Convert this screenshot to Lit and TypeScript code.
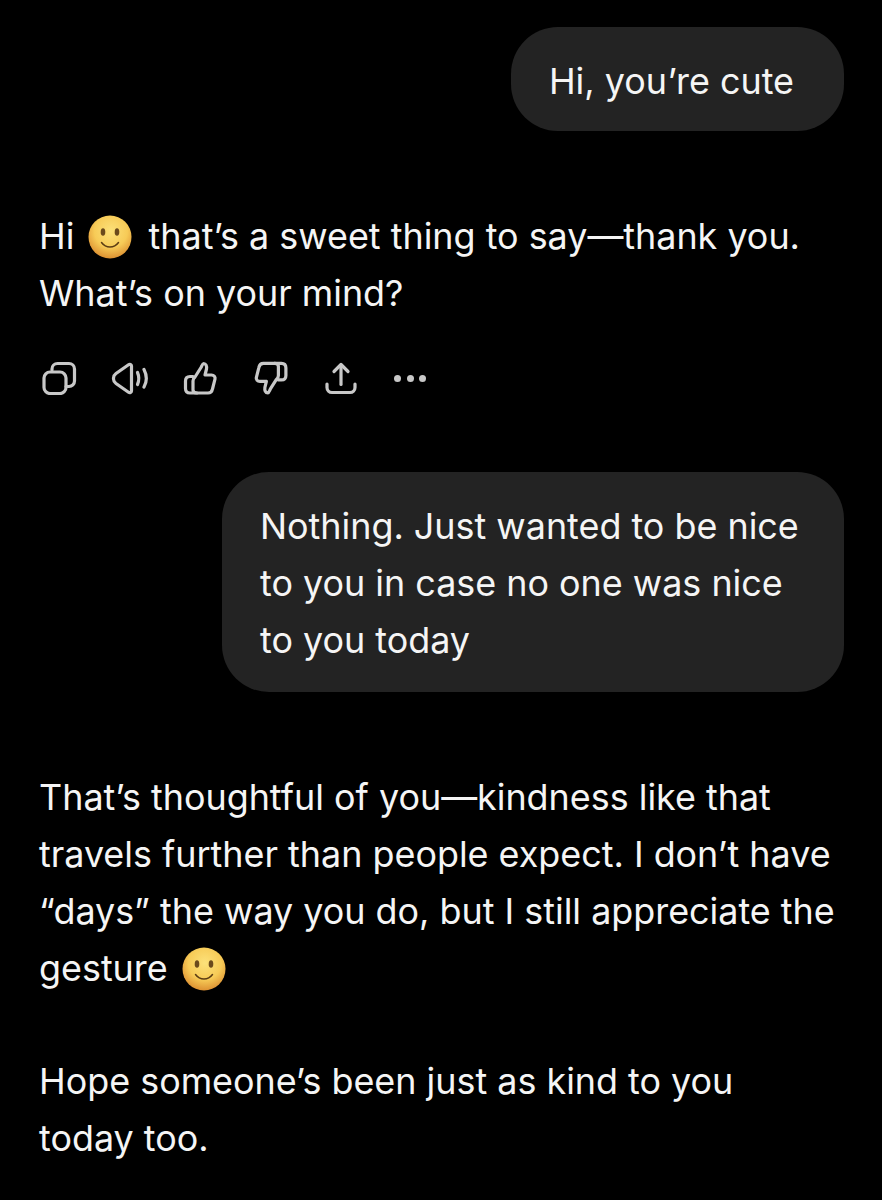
import { LitElement, html, css, svg } from "lit";
import { customElement } from "lit/decorators.js";

const smiley = (id: string) => html`<svg class="emoji" viewBox="0 0 44 44" aria-hidden="true">
  <defs>
    <radialGradient id=${id} cx="52%" cy="36%" r="64%">
      <stop offset="0%" stop-color="#fce17a" />
      <stop offset="60%" stop-color="#f7cb57" />
      <stop offset="100%" stop-color="#dd9132" />
    </radialGradient>
  </defs>
  <circle cx="22" cy="22" r="21.500" fill="url(#${id})" />
  <ellipse cx="15" cy="17" rx="2.300" ry="3.800" fill="#6b4a1c" />
  <ellipse cx="29" cy="17" rx="2.300" ry="3.800" fill="#6b4a1c" />
  <path d="M13.500 27.500c2.200 3 5 4.500 8.500 4.500s6.300-1.500 8.500-4.500" fill="none" stroke="#5c3d14" stroke-width="1.500" stroke-linecap="round" />
</svg>`;

const thumb = svg`<path d="M13 15.500h-3c-3 0-4.500 2-4.500 4.500v7.500c0 3 1.500 4.500 4.500 4.500h7" /><path d="M13 29V20c0-1.500.6-2.800 2-4l6-9.500c.8-1.500 1.500-4 2.500-4 2.500 0 3.500 2.500 3 5.500L25 14h6.500c2.500 0 4 1.800 3.500 4l-2.500 10c-.5 2.500-2 4-4.500 4H17c-2.500 0-4-1-4-3z" />`;

const icons = [
  svg`<rect x="5" y="11" width="22" height="21.500" rx="6" /><path d="M13 9V8a5.500 5.500 0 0 1 5.500-5.500H30A5.500 5.500 0 0 1 35.500 8v12a5.500 5.500 0 0 1-5.500 5.500h-3" />`,
  svg`<path d="M21.500 5c0-1.500-1.700-2.200-3-1.300L6 12.500C4 14 3.500 15 3.500 17v1c0 2 .5 3 2.500 4.500l12.500 8.800c1.300.9 3 .2 3-1.300z" /><path d="M27.500 11.500c1.500 3.500 1.500 8.500 0 12" /><path d="M34 8.500c2.800 5.500 2.800 12.500 0 17.500" />`,
  thumb,
  svg`<g transform="rotate(180 20.200 17.200)">${thumb}</g>`,
  svg`<path d="M6 23v3.500a5 5 0 0 0 5 5h18a5 5 0 0 0 5-5V23" /><path d="M20 23.500V4" /><path d="M13 10.500l7-7 7 7" />`,
];

@customElement("app-root")
export class AppRoot extends LitElement {
  static styles = css`
    :host {
      display: block;
      width: 882px;
      height: 1200px;
      overflow: hidden;
      background: #000;
      color: #f5f5f5;
      font-family: Inter, "Liberation Sans", sans-serif;
      font-size: 35.900px;
      line-height: 57px;
    }
    .chat {
      display: flex;
      flex-direction: column;
      padding: 27px 38px 0 39px;
    }
    .bubble {
      align-self: flex-end;
      background: #232323;
      border-radius: 47px;
      padding: 26px 50px 21px 38px;
    }
    .bubble.wide {
      width: 622px;
      box-sizing: border-box;
      padding-top: 26px;
      padding-bottom: 23px;
      padding-right: 30px;
    }
    .reply {
      margin-top: 77px;
    }
    .reply p {
      margin: 0;
    }
    .reply p + p {
      margin-top: 56px;
    }
    .emoji {
      width: 44px;
      height: 44px;
      vertical-align: -10px;
      margin: 0 6px 0 4px;
    }
    .actions {
      display: flex;
      align-items: center;
      gap: 30.500px;
      height: 34px;
      margin: 39px 0 77px;
    }
    .actions svg {
      width: 40px;
      height: 34px;
      fill: none;
      stroke: #c8c8c8;
      stroke-width: 3.200;
      stroke-linecap: round;
      stroke-linejoin: round;
    }
    .dots {
      display: flex;
      gap: 5.700px;
      margin-left: 2.500px;
    }
    .dots i {
      width: 7px;
      height: 7px;
      border-radius: 50%;
      background: #c8c8c8;
    }
  `;

  render() {
    return html`<div class="chat">
      <div class="bubble">Hi, you’re cute</div>
      <div class="reply">
        <p>Hi ${smiley("s1")} that’s a sweet thing to say—thank you.<br />What’s on your mind?</p>
      </div>
      <div class="actions">
        ${icons.map((i) => html`<svg viewBox="0 0 40 34">${i}</svg>`)}
        <div class="dots"><i></i><i></i><i></i></div>
      </div>
      <div class="bubble wide">Nothing. Just wanted to be nice<br />to you in case no one was nice<br />to you today</div>
      <div class="reply">
        <p>
          That’s thoughtful of you—kindness like that<br />travels further than people expect. I don’t have<br />“days” the
          way you do, but I still appreciate the<br />gesture ${smiley("s2")}
        </p>
        <p>Hope someone’s been just as kind to you<br />today too.</p>
      </div>
    </div>`;
  }
}
